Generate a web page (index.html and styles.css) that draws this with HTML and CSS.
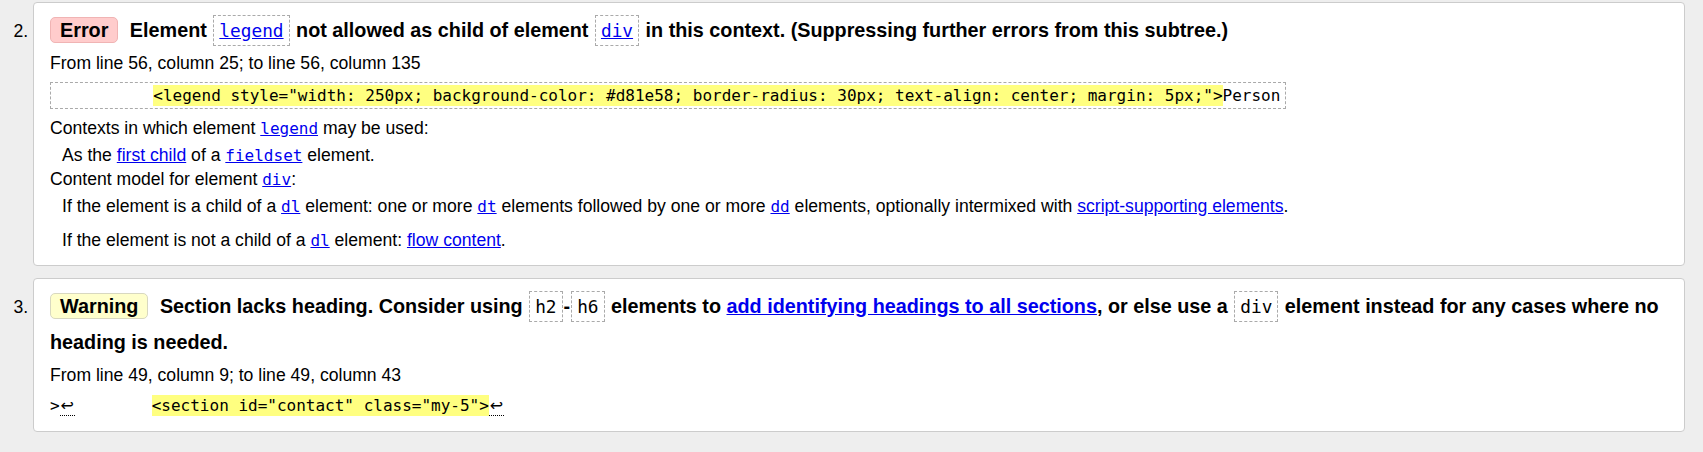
FILE: index.html
```html
<!DOCTYPE html>
<html lang="en">
<head>
<meta charset="utf-8">
<title>Validation messages</title>
<link rel="stylesheet" href="styles.css">
</head>
<body>
<ol class="messages" start="2">
  <li class="msg">
    <p class="title"><span class="badge err">Error</span> Element <code class="box"><a href="#">legend</a></code> not allowed as child of element <code class="box"><a href="#">div</a></code> in this context. (Suppressing further errors from this subtree.)</p>
    <p class="location">From line 56, column 25; to line 56, column 135</p>
    <p class="extract boxed">          <mark>&lt;legend style="width: 250px; background-color: #d81e58; border-radius: 30px; text-align: center; margin: 5px;"&gt;</mark>Person</p>
    <div class="rules">
      <p class="dt">Contexts in which element <code><a href="#">legend</a></code> may be used:</p>
      <p class="dd">As the <a href="#">first child</a> of a <code><a href="#">fieldset</a></code> element.</p>
      <p class="dt">Content model for element <code><a href="#">div</a></code>:</p>
      <p class="dd">If the element is a child of a <code><a href="#">dl</a></code> element: one or more <code><a href="#">dt</a></code> elements followed by one or more <code><a href="#">dd</a></code> elements, optionally intermixed with <a href="#">script-supporting elements</a>.</p>
      <p class="dd">If the element is not a child of a <code><a href="#">dl</a></code> element: <a href="#">flow content</a>.</p>
    </div>
  </li>
  <li class="msg">
    <p class="title"><span class="badge warn">Warning</span> Section lacks heading. Consider using <code class="box">h2</code>-<code class="box">h6</code> elements to <a href="#">add identifying headings to all sections</a>, or else use a <code class="box">div</code> element instead for any cases where no heading is needed.</p>
    <p class="location">From line 49, column 9; to line 49, column 43</p>
    <p class="extract plain">&gt;<span class="lf">↩</span>        <mark>&lt;section id="contact" class="my-5"&gt;</mark><span class="lf">↩</span></p>
  </li>
</ol>
</body>
</html>
```

FILE: styles.css
```css
body {
  margin: 0;
  background: #eeeeee;
  color: #000;
  font-family: "Liberation Sans", Arial, sans-serif;
  font-size: 17.6px;
}

a {
  color: #0000ee;
}

.messages {
  margin: 2px 18px 0 0;
  padding: 0 0 0 33px;
}

.msg {
  background: #fff;
  border: 1px solid #cccccc;
  border-radius: 4px;
  padding: 9px 16px 13px;
  margin-bottom: 12px;
}

.title {
  margin: 0 0 3px;
  font-size: 19.8px;
  font-weight: bold;
  line-height: 36px;
}

.badge {
  display: inline-block;
  padding: 0 9px;
  margin-right: 6px;
  line-height: 24px;
  border-radius: 5px;
  border: 1px solid;
}

.badge.err {
  background: #ffcccc;
  border-color: #f0b4b4;
}

.badge.warn {
  background: #ffffcc;
  border-color: #d8d8c0;
}

code {
  font-family: "DejaVu Sans Mono", "Liberation Mono", monospace;
  font-size: 16px;
  line-height: 16px;
}

.title code.box {
  font-size: 17.8px;
  font-weight: normal;
  padding: 4px 5px;
  margin: 0 1px;
  border: 1px dashed #aaaaaa;
}

.location {
  margin: 0;
  line-height: 24px;
}

.extract {
  margin: 7px 0 0;
  font-family: "DejaVu Sans Mono", "Liberation Mono", monospace;
  font-size: 16px;
  white-space: pre;
}

.extract.boxed {
  width: fit-content;
  line-height: 21px;
  padding: 2px 5px 2px 6px;
  border: 1px dashed #aaaaaa;
}

.extract.plain {
  line-height: 24px;
}

mark {
  background: #ffff80;
  color: inherit;
  padding: 1px 0;
}

.lf {
  display: inline-block;
  width: 15px;
  font-family: "DejaVu Sans", sans-serif;
  line-height: 18px;
  border-bottom: 1px dotted #000;
  text-align: center;
}

.rules {
  margin-top: 7px;
}

.dt {
  margin: 0;
  line-height: 24px;
}

.dd {
  margin: 3px 0 0 12px;
  line-height: 24px;
}

.dd + .dd {
  margin-top: 10px;
}
```
